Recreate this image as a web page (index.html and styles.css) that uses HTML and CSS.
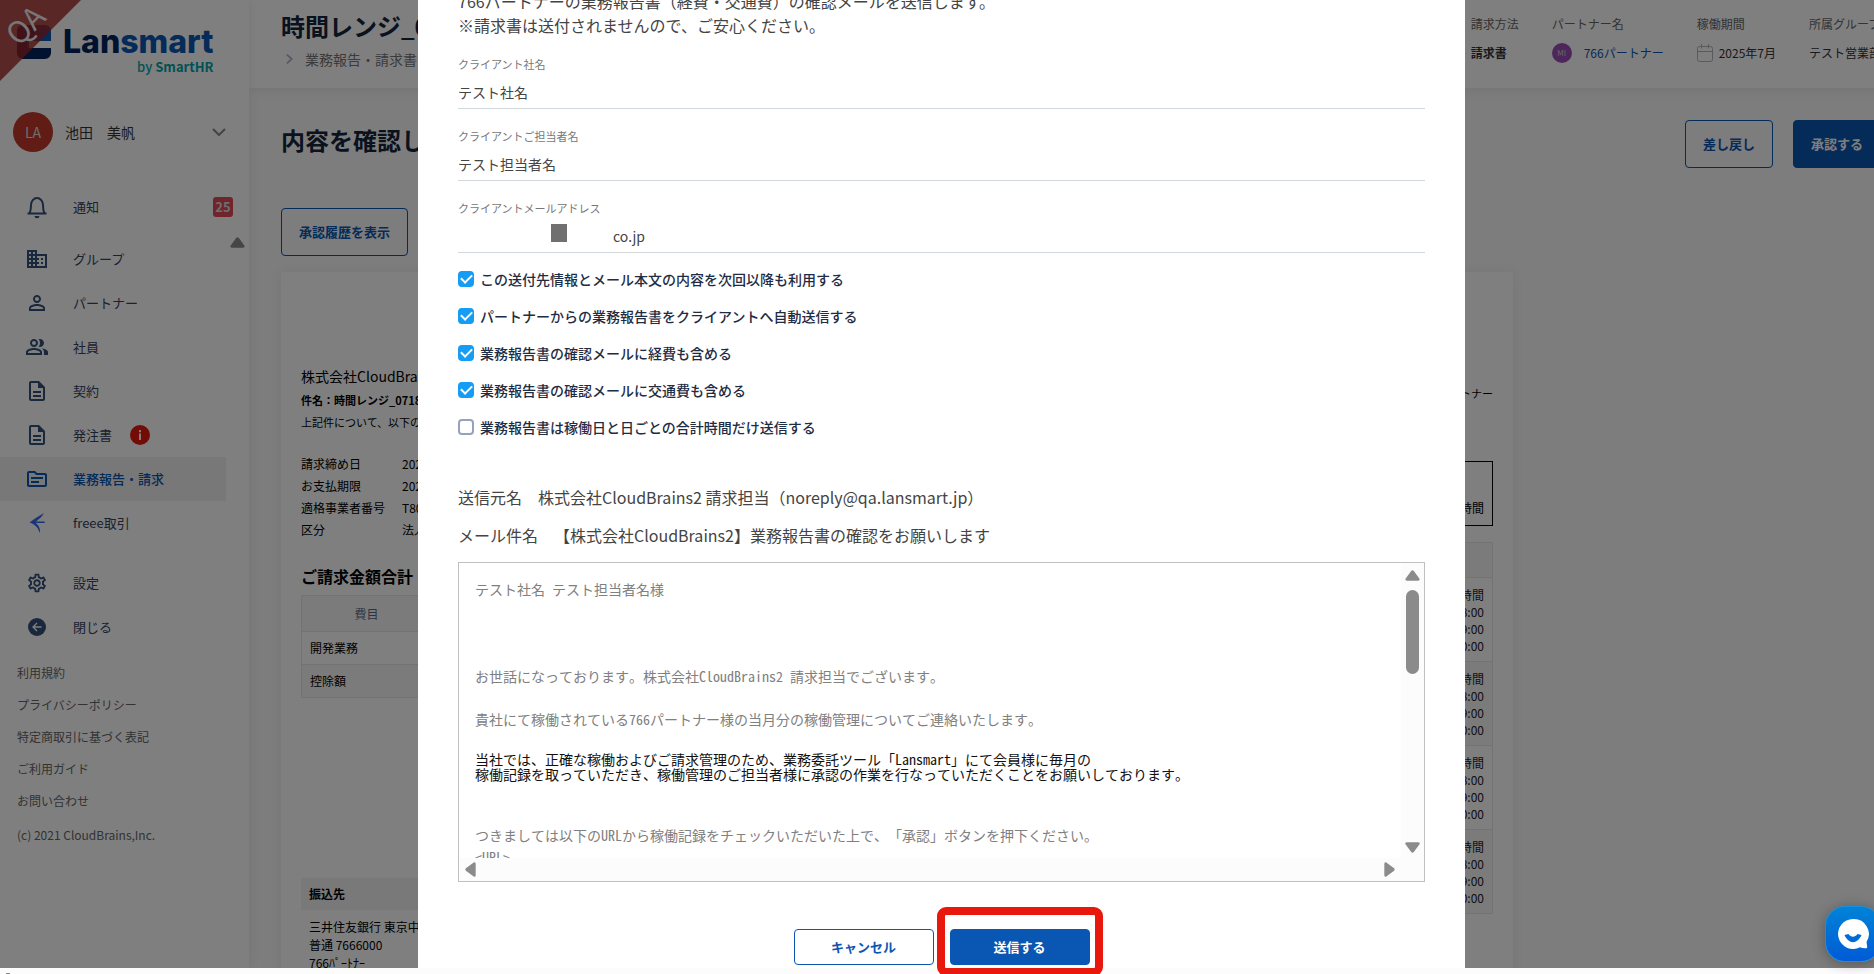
FILE: index.html
```html
<!DOCTYPE html>
<html lang="ja">
<head>
<meta charset="utf-8">
<title>Lansmart</title>
<link rel="stylesheet" href="styles.css">
</head>
<body>
<div class="viewport">
  <div class="app">
    <aside class="sidebar">
      <a class="logo" href="#">
        <svg class="logo-mark" viewBox="0 0 34 34" aria-hidden="true">
          <path d="M6 0h22a6 6 0 0 1 6 6v10H20a8 8 0 0 0-8 7H0V6a6 6 0 0 1 6-6z" fill="#0a56b3"/>
          <path d="M0 6a6 6 0 0 1 6-6h12v8a8 8 0 0 1-8 8H0z" fill="#002560"/>
          <path d="M0 16h10v7h24v5a6 6 0 0 1-6 6H6a6 6 0 0 1-6-6z" fill="#002560"/>
          <path d="M12 16h22v6.500H12z" fill="#fff"/>
        </svg>
        <span class="logo-words">
          <span class="logo-name">Lan<span class="logo-smart">smart</span></span>
          <span class="logo-by"><span class="by">by</span> SmartHR</span>
        </span>
      </a>
      <div class="ribbon"><span class="ribbon-text">QA</span></div>
      <button class="user" type="button">
        <span class="user-avatar">LA</span>
        <span class="user-name">池田　美帆</span>
        <svg class="chevron" viewBox="0 0 14 8" aria-hidden="true"><path d="M1 1l6 6 6-6" fill="none" stroke="#888" stroke-width="2"/></svg>
      </button>
      <a class="nav-item notice" href="#">
        <svg class="icon" viewBox="0 0 24 24" aria-hidden="true"><path d="M2.500 18.500h19M4.500 18.500c1-2 1.500-4 1.500-8.500a6 7 0 0 1 12 0c0 4.500.5 6.500 1.500 8.500" fill="none" stroke="#34507a" stroke-width="2"/><path d="M9.500 21h5a2.500 2.200 0 0 1-5 0z" fill="#34507a"/></svg>
        <span>通知</span><span class="count">25</span>
      </a>
      <div class="nav-scroll">
        <nav class="nav">
          <a class="nav-item" href="#"><svg class="icon" viewBox="0 0 24 24"><path d="M12 7V3H2v18h20V7H12zM6 19H4v-2h2v2zm0-4H4v-2h2v2zm0-4H4V9h2v2zm0-4H4V5h2v2zm4 12H8v-2h2v2zm0-4H8v-2h2v2zm0-4H8V9h2v2zm0-4H8V5h2v2zm10 12h-8v-2h2v-2h-2v-2h2v-2h-2V9h8v10zm-2-8h-2v2h2v-2zm0 4h-2v2h2v-2z"/></svg><span>グループ</span></a>
          <a class="nav-item" href="#"><svg class="icon" viewBox="0 0 24 24"><path d="M12 5.900a2.100 2.100 0 1 1 0 4.200 2.100 2.100 0 0 1 0-4.200m0 9c2.970 0 6.100 1.460 6.100 2.100v1.100H5.900V17c0-.64 3.130-2.100 6.100-2.100M12 4C9.790 4 8 5.790 8 8s1.790 4 4 4 4-1.790 4-4-1.790-4-4-4zm0 9c-2.670 0-8 1.340-8 4v3h16v-3c0-2.660-5.330-4-8-4z"/></svg><span>パートナー</span></a>
          <a class="nav-item" href="#"><svg class="icon" viewBox="0 0 24 24"><path d="M16.670 13.130C18.040 14.060 19 15.320 19 17v3h4v-3c0-2.180-3.570-3.470-6.330-3.870zM15 12c2.210 0 4-1.790 4-4s-1.790-4-4-4c-.47 0-.91.1-1.330.24C14.500 5.270 15 6.580 15 8s-.5 2.730-1.330 3.760c.42.14.86.24 1.330.24zM9 12c2.210 0 4-1.790 4-4s-1.790-4-4-4-4 1.790-4 4 1.790 4 4 4zm0-6c1.100 0 2 .9 2 2s-.9 2-2 2-2-.9-2-2 .9-2 2-2zm0 7c-2.670 0-8 1.340-8 4v3h16v-3c0-2.660-5.330-4-8-4zm6 5H3v-.99C3.200 16.290 6.300 15 9 15s5.800 1.290 6 2v1z"/></svg><span>社員</span></a>
          <a class="nav-item" href="#"><svg class="icon" viewBox="0 0 24 24"><path d="M8 16h8v2H8zm0-4h8v2H8zm6-10H6c-1.100 0-2 .9-2 2v16c0 1.100.89 2 1.990 2H18c1.100 0 2-.9 2-2V8l-6-6zm4 18H6V4h7v5h5v11z"/></svg><span>契約</span></a>
          <a class="nav-item" href="#"><svg class="icon" viewBox="0 0 24 24"><path d="M8 16h8v2H8zm0-4h8v2H8zm6-10H6c-1.100 0-2 .9-2 2v16c0 1.100.89 2 1.990 2H18c1.100 0 2-.9 2-2V8l-6-6zm4 18H6V4h7v5h5v11z"/></svg><span>発注書</span><svg class="alert" viewBox="0 0 20 20"><circle cx="10" cy="10" r="10" fill="#e6170c"/><path d="M9 5h2v2.200H9zM9 8.500h2V15H9z" fill="#fff"/></svg></a>
          <a class="nav-item active" href="#"><svg class="icon" viewBox="0 0 24 24"><path d="M20 6h-8l-2-2H4c-1.100 0-2 .9-2 2v12c0 1.100.9 2 2 2h16c1.100 0 2-.9 2-2V8c0-1.100-.9-2-2-2zm0 12H4V6h5.170l2 2H20v10zm-2-6H6v-2h12v2zm-4 4H6v-2h8v2z"/></svg><span>業務報告・請求</span></a>
          <a class="nav-item" href="#"><svg class="icon" viewBox="0 0 24 24"><path d="M19 2C14 5 9 8 4.500 11.500c3 1 5.500 2.500 8 5.500l2.500 5c.5-3-.5-6-2.500-8.500l-2-1.500H20l-.5-1.500h-8.500C14.500 8 17 5.500 19 2z" fill="#3a6be8"/></svg><span>freee取引</span></a>
          <a class="nav-item spaced" href="#"><svg class="icon" viewBox="-1 -1 26 26"><path d="M19.430 12.980c.04-.32.07-.64.07-.98 0-.34-.03-.66-.07-.98l2.110-1.650c.19-.15.24-.42.12-.64l-2-3.460c-.09-.16-.26-.25-.44-.25-.06 0-.12.01-.17.03l-2.490 1c-.52-.4-1.080-.73-1.690-.98l-.38-2.650C14.460 2.180 14.250 2 14 2h-4c-.25 0-.46.18-.49.42l-.38 2.650c-.61.25-1.170.59-1.690.98l-2.490-1c-.06-.02-.12-.03-.18-.03-.17 0-.34.09-.43.25l-2 3.460c-.13.22-.07.49.12.64l2.110 1.650c-.04.32-.07.65-.07.98 0 .33.03.66.07.98l-2.110 1.650c-.19.15-.24.42-.12.64l2 3.460c.09.16.26.25.44.25.06 0 .12-.01.17-.03l2.490-1c.52.4 1.080.73 1.690.98l.38 2.650c.03.24.24.42.49.42h4c.25 0 .46-.18.49-.42l.38-2.650c.61-.25 1.170-.59 1.690-.98l2.490 1c.06.02.12.03.18.03.17 0 .34-.09.43-.25l2-3.460c.12-.22.07-.49-.12-.64l-2.110-1.650zm-1.980-1.710c.04.31.05.52.05.73 0 .21-.02.43-.05.73l-.14 1.130.89.7 1.080.84-.7 1.210-1.270-.51-1.040-.42-.9.68c-.43.32-.84.56-1.250.73l-1.060.43-.16 1.130-.2 1.350h-1.400l-.19-1.350-.16-1.130-1.060-.43c-.43-.18-.83-.41-1.230-.71l-.91-.7-1.060.43-1.270.51-.7-1.210 1.080-.84.89-.7-.14-1.130c-.03-.31-.05-.54-.05-.74s.02-.43.05-.73l.14-1.130-.89-.7-1.080-.84.7-1.210 1.270.51 1.040.42.9-.68c.43-.32.84-.56 1.250-.73l1.060-.43.16-1.130.2-1.350h1.390l.19 1.350.16 1.130 1.060.43c.43.18.83.41 1.230.71l.91.7 1.060-.43 1.270-.51.7 1.210-1.070.85-.89.7.14 1.130zM12 8c-2.210 0-4 1.790-4 4s1.790 4 4 4 4-1.790 4-4-1.790-4-4-4zm0 6c-1.100 0-2-.9-2-2s.9-2 2-2 2 .9 2 2-.9 2-2 2z"/></svg><span>設定</span></a>
          <a class="nav-item" href="#"><svg class="icon" viewBox="0 0 24 24"><circle cx="12" cy="12" r="9"/><path d="M16.500 12h-8M12 8l-4 4 4 4" fill="none" stroke="#fff" stroke-width="1.300"/></svg><span>閉じる</span></a>
        </nav>
        <div class="nav-bar"><svg viewBox="0 0 15 11" class="tri"><path d="M6 1.200q1.500-1.800 3 0l5.500 7.500q.8 2-1.500 2H2q-2.300 0-1.500-2z" fill="#8a8a8a"/></svg></div>
      </div>
      <div class="legal">
        <a href="#">利用規約</a>
        <a href="#">プライバシーポリシー</a>
        <a href="#">特定商取引に基づく表記</a>
        <a href="#">ご利用ガイド</a>
        <a href="#">お問い合わせ</a>
        <span class="copyright">(c) 2021 CloudBrains,Inc.</span>
      </div>
    </aside>

    <main class="main">
      <header class="header">
        <div class="titles">
          <h1 class="title">時間レンジ_0718</h1>
          <div class="crumb"><svg class="crumb-icon" viewBox="0 0 8 12"><path d="M1 1l5.500 5L1 11" fill="none" stroke="#a9b2c4" stroke-width="2"/></svg><span>業務報告・請求書</span></div>
        </div>
        <dl class="meta">
          <div class="meta-item"><dt>請求方法</dt><dd class="strong">請求書</dd></div>
          <div class="meta-item"><dt>パートナー名</dt><dd class="partner"><span class="mini-avatar">MI</span><a href="#">766パートナー</a></dd></div>
          <div class="meta-item"><dt>稼働期間</dt><dd class="period"><svg class="cal" viewBox="0 0 16 18"><path d="M2.500 2.500h11a2 2 0 0 1 2 2v11a2 2 0 0 1-2 2h-11a2 2 0 0 1-2-2v-11a2 2 0 0 1 2-2zM.5 7.500h15M4.500 0v4.500M11.500 0v4.500" fill="none" stroke="#b4b4bc"/></svg>2025年7月</dd></div>
          <div class="meta-item"><dt>所属グループ</dt><dd>テスト営業部</dd></div>
        </dl>
      </header>
      <div class="content">
        <div class="head-row">
          <h2 class="title">内容を確認して承認</h2>
          <div class="actions">
            <button class="btn outline" type="button">差し戻し</button>
            <button class="btn solid" type="button">承認する</button>
          </div>
        </div>
        <button class="btn outline history" type="button">承認履歴を表示</button>
        <section class="card">
          <div class="bill">
            <p class="company">株式会社CloudBrains2</p>
            <p class="subject">件名：時間レンジ_0718</p>
            <p class="note">上記件について、以下のとおり請求いたします</p>
            <dl class="facts">
              <dt>請求締め日</dt><dd>2025/07/31</dd>
              <dt>お支払期限</dt><dd>2025/08/31</dd>
              <dt>適格事業者番号</dt><dd>T80</dd>
              <dt>区分</dt><dd>法人</dd>
            </dl>
            <h3 class="sum-title">ご請求金額合計</h3>
            <table class="costs">
              <thead><tr><th>費目</th><th>金額</th></tr></thead>
              <tbody><tr><td>開発業務</td><td></td></tr><tr><td>控除額</td><td></td></tr></tbody>
            </table>
            <div class="bank">
              <h4>振込先</h4>
              <p>三井住友銀行 東京中央<br>普通 7666000<br>766ﾊﾟｰﾄﾅｰ</p>
            </div>
          </div>
          <div class="work">
            <p class="worker">766パートナー</p>
            <div class="total">時間</div>
            <table class="hours">
              <thead><tr><th></th></tr></thead>
              <tbody>
                <tr><td>時間<br>8:00<br>9:00<br>0:00</td></tr>
                <tr><td>時間<br>8:00<br>9:00<br>0:00</td></tr>
                <tr><td>時間<br>8:00<br>9:00<br>0:00</td></tr>
                <tr><td>時間<br>8:00<br>9:00<br>0:00</td></tr>
              </tbody>
            </table>
          </div>
        </section>
      </div>
    </main>
  </div>

  <div class="overlay">
    <form class="modal" role="dialog" aria-modal="true">
      <p class="lead">766パートナーの業務報告書（経費・交通費）の確認メールを送信します。<br>※請求書は送付されませんので、ご安心ください。</p>
      <div class="fields">
        <div class="field"><label for="f1">クライアント社名</label><input id="f1" type="text" value="テスト社名"></div>
        <div class="field"><label for="f2">クライアントご担当者名</label><input id="f2" type="text" value="テスト担当者名"></div>
        <div class="field email"><label for="f3">クライアントメールアドレス</label><input id="f3" type="text" value="co.jp"><span class="mask"></span></div>
      </div>
      <div class="checks">
        <label class="check"><input type="checkbox" checked>この送付先情報とメール本文の内容を次回以降も利用する</label>
        <label class="check"><input type="checkbox" checked>パートナーからの業務報告書をクライアントへ自動送信する</label>
        <label class="check"><input type="checkbox" checked>業務報告書の確認メールに経費も含める</label>
        <label class="check"><input type="checkbox" checked>業務報告書の確認メールに交通費も含める</label>
        <label class="check"><input type="checkbox">業務報告書は稼働日と日ごとの合計時間だけ送信する</label>
      </div>
      <div class="mail-head">
        <p>送信元名　株式会社CloudBrains2 請求担当（noreply@qa.lansmart.jp）</p>
        <p>メール件名　【株式会社CloudBrains2】業務報告書の確認をお願いします</p>
      </div>
      <div class="mail">
        <div class="mail-body">
          <p>テスト社名 テスト担当者名様</p>
          <p class="greeting">お世話になっております。株式会社CloudBrains2 請求担当でございます。</p>
          <p class="intro">貴社にて稼働されている766パートナー様の当月分の稼働管理についてご連絡いたします。</p>
          <p class="edit">当社では、正確な稼働およびご請求管理のため、業務委託ツール「Lansmart」にて会員様に毎月の<br>稼働記録を取っていただき、稼働管理のご担当者様に承認の作業を行なっていただくことをお願いしております。</p>
          <p class="closing">つきましては以下のURLから稼働記録をチェックいただいた上で、「承認」ボタンを押下ください。<br>&lt;URL&gt;</p>
        </div>
        <div class="vbar">
          <svg viewBox="0 0 15 11" class="tri"><path d="M6 1.200q1.500-1.800 3 0l5.500 7.500q.8 2-1.500 2H2q-2.300 0-1.500-2z" fill="#8b8b8b"/></svg>
          <span class="thumb"></span>
          <svg viewBox="0 0 15 11" class="tri"><path d="M6 9.800q1.500 1.800 3 0l5.500-7.500q.8-2-1.500-2H2q-2.300 0-1.500 2z" fill="#8b8b8b"/></svg>
        </div>
        <div class="hbar">
          <svg viewBox="0 0 11 15" class="tri-side"><path d="M1.200 6q-1.800 1.500 0 3l7.500 5.500q2 .8 2-1.500V2q0-2.300-2-1.500z" fill="#8b8b8b"/></svg>
          <svg viewBox="0 0 11 15" class="tri-side"><path d="M9.800 6q1.800 1.500 0 3l-7.500 5.500q-2 .8-2-1.500V2q0-2.300 2-1.500z" fill="#8b8b8b"/></svg>
        </div>
      </div>
      <div class="modal-actions">
        <button class="btn small outline" type="button">キャンセル</button>
        <span class="highlight"><button class="btn small solid" type="submit">送信する</button></span>
      </div>
    </form>
  </div>

  <button class="chat" type="button" aria-label="チャット">
    <svg viewBox="0 0 32 32" class="chat-icon"><path d="M16 1a15 15 0 1 0 7 28.300c2 .8 4.500 1.200 7 .7.500-2-.3-4-.5-6A15 15 0 0 0 16 1z" fill="#fff"/><path d="M7.500 17l4-1c2.500 3.600 6.500 3.600 9 0l4 1c-4 9.500-13 9.500-17 0z" fill="#006bd6"/></svg>
  </button>
</div>
<footer class="page-bar"><svg viewBox="0 0 8 6" class="bar-arrow"><path d="M2 0h4v6H2z" fill="#8b8b8b"/></svg></footer>
</body>
</html>
```

FILE: styles.css
```css
* { box-sizing: border-box; }
html, body { height: 100%; }
body {
  margin: 0;
  overflow: hidden;
  background: #fcfcfc;
  color: #111;
  font-family: "Noto Sans CJK JP", sans-serif;
  font-size: 12px;
  line-height: 18px;
  text-spacing-trim: space-all;
}
h1, h2, h3, h4, p, dl, dd { margin: 0; }
a { color: inherit; text-decoration: none; }
button, input { font: inherit; }

.viewport { position: relative; height: calc(100vh - 6px); }
.app { display: flex; width: calc(100% + 40px); height: 100%; overflow: hidden; background: #fafafa; }

/* Sidebar */
.sidebar {
  position: relative;
  flex: none;
  width: 249px;
  background: #fff;
  box-shadow: 0 0 12px rgba(0, 0, 0, .08);
  z-index: 1;
}
.logo { display: flex; gap: 12px; padding: 25px 0 0 17px; height: 112px; }
.logo-mark { width: 34px; height: 34px; }
.logo-words { display: flex; flex-direction: column; align-items: flex-end; }
.logo-name { font: 800 32px/34px Inter, sans-serif; color: #002560; }
.logo-smart { color: #0a56b3; }
.logo-by { font-size: 13px; font-weight: 700; line-height: 16px; color: #00a5ab; }
.by { font-weight: 500; }
.ribbon {
  position: absolute;
  top: 0;
  left: 0;
  width: 81px;
  height: 81px;
  padding: 8px 4px;
  background: rgba(160, 35, 32, .8);
  clip-path: polygon(0 0, 100% 0, 0 100%);
}
.ribbon-text {
  display: block;
  width: 40px;
  font-size: 30px;
  line-height: 32px;
  text-align: center;
  color: #eee;
  transform: rotate(-45deg);
}
.user {
  display: flex;
  align-items: center;
  width: 100%;
  padding: 0 23px 0 13px;
  border: 0;
  background: none;
  color: #333;
  font-size: 14px;
}
.user-avatar {
  width: 40px;
  margin-right: 12px;
  border-radius: 50%;
  background: #c0392b;
  color: #ddd;
  line-height: 40px;
}
.chevron { width: 14px; height: 8px; margin-left: auto; }
.nav-item {
  display: flex;
  align-items: center;
  gap: 24px;
  height: 44px;
  padding-left: 25px;
  color: #34435f;
  font-size: 13px;
}
.icon { width: 24px; height: 24px; fill: #34507a; }
.notice { margin: 33px 16px 8px 0; }
.count {
  margin-left: auto;
  width: 20px;
  border-radius: 3px;
  background: #e04858;
  color: #ddd;
  font-weight: 700;
  line-height: 20px;
  text-align: center;
}
.nav-scroll { display: flex; }
.nav { flex: 1; }
.nav-bar { width: 23px; padding-left: 4px; }
.tri { width: 15px; height: 11px; display: block; }
.active { background: #f0f0f0; color: #0a56b3; font-weight: 500; }
.active .icon { fill: #0a56b3; }
.spaced { margin-top: 16px; }
.alert { width: 20px; height: 20px; margin-left: -6px; }
.legal { display: flex; flex-direction: column; gap: 14px; padding: 15px 0 0 17px; color: #666; }
.copyright { padding-top: 2px; }

/* Page */
.main { flex: 1; min-width: 0; }
.header {
  display: flex;
  justify-content: space-between;
  height: 88px;
  padding: 9px 33px 0 32px;
  background: #fff;
  box-shadow: 0 2px 12px rgba(0, 0, 0, .08);
}
.title { font-size: 24px; line-height: 34px; font-weight: 700; color: #14253d; }
.crumb { display: flex; align-items: center; gap: 12px; padding: 6px 0 0 5px; font-size: 14px; line-height: 20px; color: #777; }
.crumb-icon { width: 7px; height: 12px; }
.meta { display: flex; gap: 33px; padding-top: 6px; color: #333; }
.meta-item { display: flex; flex-direction: column; gap: 10px; }
.meta dt { color: #666; }
.strong { font-weight: 700; }
.meta dd { display: flex; align-items: center; height: 20px; }
.partner { gap: 12px; color: #0a56b3; }
.period { gap: 6px; }
.mini-avatar { width: 20px; border-radius: 50%; background: #9b4fb8; color: #ccc; font-size: 8px; line-height: 20px; text-align: center; }
.cal { width: 16px; height: 18px; }
.content { padding: 32px 33px 0 32px; }
.head-row { display: flex; justify-content: space-between; }
.head-row .title { line-height: 40px; }
.actions { display: flex; gap: 20px; }
.btn {
  height: 48px;
  padding: 0 17px;
  border: 1px solid #0a56b3;
  border-radius: 4px;
  font-size: 13px;
  font-weight: 700;
}
.outline { background: #fff; color: #0a56b3; }
.content .outline { background: none; }
.solid { background: #0a56b3; color: #fff; }
.history { display: block; margin-top: 40px; }
.card {
  display: flex;
  justify-content: space-between;
  height: 900px;
  margin: 16px 368px 0 0;
  padding: 91px 20px 0;
  background: #fff;
  box-shadow: 0 0 12px rgba(0, 0, 0, .06);
  color: #000;
}
.bill { width: 560px; }
.work { width: 560px; text-align: right; }
.company { font-size: 14px; line-height: 26px; }
.subject, .note { font-size: 11px; line-height: 22px; }
.subject { font-weight: 700; }
.facts { display: grid; grid-template-columns: 101px 1fr; line-height: 22px; padding: 20px 0; }
.sum-title { font-size: 16px; line-height: 28px; padding-top: 1px; }
table { border-collapse: collapse; width: 100%; }
th, td { border: 1px solid #e6e6e6; padding: 0 8px; text-align: left; }
.costs { margin-top: 5px; table-layout: fixed; }
.costs th { height: 36px; background: #f7f7f7; color: #5b6b88; font-weight: 400; text-align: center; }
.costs th:first-child { width: 130px; }
.costs td { height: 33px; }
tr:nth-child(even) td { background: #f7f7f7; }
.bank { margin-top: 180px; }
.bank h4 { padding-left: 8px; background: #f2f2f2; font-size: 12px; line-height: 32px; }
.bank p { padding: 8px; }
.worker { padding-top: 19px; font-size: 11px; line-height: 22px; }
.total { height: 65px; margin-top: 57px; padding: 37px 8px 0; border: 1px solid #000; }
.hours { margin-top: 16px; }
.hours th { height: 35px; background: #f7f7f7; }
.hours td { padding: 8px 8px 7px; line-height: 17px; text-align: right; color: #222; }

/* Dialog */
.overlay {
  position: absolute;
  inset: 0;
  z-index: 2;
  display: flex;
  flex-direction: column;
  justify-content: flex-end;
  padding: 0 409px 0 418px;
  background: rgba(0, 0, 0, .5);
}
.modal { flex: none; padding: 24px 40px 3px; background: #fff; color: #444; }
.lead { font-size: 16px; line-height: 24px; }
.fields { display: flex; flex-direction: column; gap: 19px; margin-top: 19px; }
.field { position: relative; display: flex; flex-direction: column; gap: 6px; }
.field label { font-size: 11px; line-height: 16px; color: #777; }
.field input {
  height: 31px;
  padding: 0 0 2px;
  border: 0;
  border-bottom: 1px solid #d3d8dd;
  background: none;
  color: #444;
  font-size: 14px;
}
.email input { padding-left: 155px; }
.mask { position: absolute; left: 93px; top: 24px; width: 16px; height: 18px; background: #707070; }
.checks { display: flex; flex-direction: column; gap: 17px; margin-top: 16px; }
.check { display: flex; align-items: center; gap: 6px; font-size: 14px; line-height: 20px; font-weight: 500; color: #1f2d44; }
.check input {
  display: grid;
  place-items: center;
  appearance: none;
  width: 16px;
  height: 16px;
  margin: 0;
  border: 2px solid #94a2c0;
  border-radius: 4px;
}
.check input:checked { border-color: #159cf4; background: #159cf4; }
.check input:checked::before {
  content: "";
  width: 9px;
  height: 5px;
  margin-bottom: 3px;
  border: solid #fff;
  border-width: 0 0 2px 2px;
  transform: rotate(-45deg);
}
.mail-head { display: flex; flex-direction: column; gap: 14px; margin-top: 48px; font-size: 16px; line-height: 24px; }
.mail {
  display: grid;
  grid-template: 295px 23px / 1fr 23px;
  margin-top: 15px;
  border: 1px solid #c0c0c0;
  background: #fcfcfc;
}
.mail-body {
  overflow: hidden;
  padding: 15px 16px 0;
  background: #fff;
  color: #808080;
  font-family: "Noto Sans Mono CJK JP", "Noto Sans CJK JP", monospace;
  font-size: 14px;
  line-height: 22px;
  white-space: nowrap;
}
.greeting { margin-top: 65px; }
.intro { margin-top: 21px; }
.edit { margin-top: 22px; line-height: 15px; color: #111; }
.closing { margin-top: 42px; }
.vbar { display: flex; flex-direction: column; align-items: center; padding: 7px 0 5px; }
.thumb { width: 13px; height: 84px; margin: 9px 0 auto; border-radius: 7px; background: #8b8b8b; }
.hbar { display: flex; align-items: center; justify-content: space-between; padding: 0 6px; }
.tri-side { width: 11px; height: 15px; }
.modal-actions { display: flex; justify-content: center; gap: 16px; margin-top: 47px; }
.small { width: 140px; height: 36px; }
.highlight { position: relative; }
.highlight::after {
  content: "";
  position: absolute;
  inset: -22px -13px -11px;
  border: 8px solid #e8180c;
  border-radius: 9px;
  pointer-events: none;
}

.chat {
  position: absolute;
  z-index: 3;
  right: -7px;
  bottom: 6px;
  display: grid;
  place-items: center;
  width: 56px;
  height: 56px;
  padding: 0;
  border: 1px solid #1590e0;
  border-radius: 20px;
  background: linear-gradient(#0083d6, #005bd6);
  box-shadow: 0 2px 14px rgba(0, 0, 0, .3);
}
.chat-icon { width: 32px; height: 32px; }
.page-bar { height: 6px; padding: 5px 0 0 4px; overflow: hidden; background: #fcfcfc; }
.bar-arrow { display: block; width: 8px; height: 6px; }
```
